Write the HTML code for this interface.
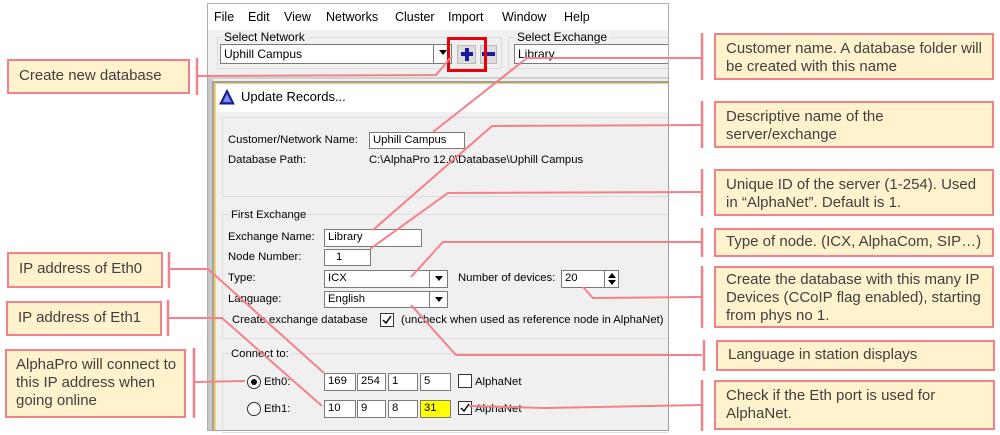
<!DOCTYPE html>
<html><head><meta charset="utf-8"><style>
*{margin:0;padding:0;box-sizing:border-box}
body{width:1000px;height:435px;background:#fff;position:relative;overflow:hidden;font-family:"Liberation Sans",Arial,sans-serif}
.a{position:absolute}
.ui{font-size:11.3px;color:#000;white-space:nowrap;line-height:14px}
.in{position:absolute;background:#fff;border:1px solid #7a7a7a;font-size:11.3px;line-height:15px;padding-left:3px;white-space:nowrap}
.dd{position:absolute;top:0;right:0;width:18px;height:100%;border-left:1px solid #7a7a7a;background:#fff}
.dd:after{content:"";position:absolute;left:5px;top:5px;border-left:4px solid transparent;border-right:4px solid transparent;border-top:5px solid #000}
.cb{position:absolute;width:14px;height:14px;border:1px solid #333;background:#fff}
.box{position:absolute;background:#fff2cc;border:2.5px solid #f4818a;font-size:15px;color:#404040;line-height:18px;padding:4px 0 0 10px;white-space:nowrap}
.grp{position:absolute;border:1px solid #dcdcdc}
</style></head><body>
<div class="a" style="left:207px;top:3px;width:462px;height:428px;border:1px solid #adadad;background:#f0f0f0;overflow:hidden">
</div>
<div class="a" style="left:208px;top:4px;width:460px;height:26px;background:#fff"></div>
<div class="a ui" style="top:10px;left:214px;font-size:12.5px">File</div>
<div class="a ui" style="top:10px;left:248px;font-size:12.5px">Edit</div>
<div class="a ui" style="top:10px;left:284px;font-size:12.5px">View</div>
<div class="a ui" style="top:10px;left:326px;font-size:12.5px">Networks</div>
<div class="a ui" style="top:10px;left:395px;font-size:12.5px">Cluster</div>
<div class="a ui" style="top:10px;left:448px;font-size:12.5px">Import</div>
<div class="a ui" style="top:10px;left:502px;font-size:12.5px">Window</div>
<div class="a ui" style="top:10px;left:564px;font-size:12.5px">Help</div>
<div class="grp" style="left:217px;top:37px;width:285px;height:32px"></div>
<div class="grp" style="left:508px;top:37px;width:160px;height:32px;border-right:none"></div>
<div class="a ui" style="left:222px;top:30px;background:#f0f0f0;padding:0 2px;font-size:12px">Select Network</div>
<div class="a ui" style="left:515px;top:30px;background:#f0f0f0;padding:0 2px;font-size:12px">Select Exchange</div>
<div class="in" style="left:220px;top:44px;width:232px;height:20px;line-height:18px;font-size:12px">Uphill Campus<div class="dd"></div></div>
<div class="in" style="left:514px;top:44px;width:154px;height:20px;line-height:18px;border-right:none;font-size:12px">Library</div>
<div class="a" style="left:457px;top:45px;width:19px;height:19px;background:#dcdcdc;border:1px solid #bbb"></div>
<div class="a" style="left:465px;top:48px;width:4px;height:13px;background:#1a1aa0"></div>
<div class="a" style="left:461px;top:52px;width:12px;height:4px;background:#1a1aa0"></div>
<div class="a" style="left:480px;top:45px;width:17px;height:19px;background:#dcdcdc;border:1px solid #bbb"></div>
<div class="a" style="left:482px;top:52px;width:13px;height:4px;background:#1a1aa0"></div>
<div class="a" style="left:447px;top:37px;width:40px;height:35px;border:3px solid #e8000b"></div>
<div class="a" style="left:208px;top:77px;width:460px;height:2px;background:#d0d0d0"></div>
<div class="a" style="left:208px;top:79px;width:5px;height:351px;background:#c8c8c8"></div>
<div class="a" style="left:212px;top:81px;width:457px;height:350px;background:#a0a0a0"></div>
<div class="a" style="left:214px;top:83px;width:454px;height:347px;background:#f0f0f0;border-left:2px solid #f0d070;border-top:1px solid #f0d070"></div>
<div class="a" style="left:216px;top:84px;width:452px;height:28px;background:#fff"></div>
<svg class="a" style="left:219px;top:89px" width="16" height="16"><polygon points="8,1 15,15 1,15" fill="#2030c0" stroke="#101060"/><polygon points="8,5 12,13 4,13" fill="#8090ff"/></svg>
<div class="a ui" style="left:241px;top:90px;font-size:13px">Update Records...</div>
<div class="grp" style="left:222px;top:117px;width:446px;height:80px;border-right:none"></div>
<div class="a ui" style="left:228px;top:133px">Customer/Network Name:</div>
<div class="in" style="left:369px;top:132px;width:96px;height:17px">Uphill Campus</div>
<div class="a ui" style="left:228px;top:153px">Database Path:</div>
<div class="a ui" style="left:369px;top:153px">C:\AlphaPro 12.0\Database\Uphill Campus</div>
<div class="grp" style="left:222px;top:214px;width:446px;height:125px;border-right:none"></div>
<div class="a ui" style="left:229px;top:208px;background:#f0f0f0;padding:0 2px">First Exchange</div>
<div class="a ui" style="left:228px;top:230px">Exchange Name:</div>
<div class="in" style="left:324px;top:229px;width:98px;height:18px">Library</div>
<div class="a ui" style="left:228px;top:250px">Node Number:</div>
<div class="in" style="left:324px;top:249px;width:47px;height:17px;padding-left:11px">1</div>
<div class="a ui" style="left:228px;top:271px">Type:</div>
<div class="in" style="left:324px;top:270px;width:124px;height:18px">ICX<div class="dd"></div></div>
<div class="a ui" style="left:458px;top:271px">Number of devices:</div>
<div class="in" style="left:561px;top:270px;width:58px;height:18px">20<div class="a" style="right:0;top:0;width:14px;height:16px;border-left:1px solid #7a7a7a"></div></div>
<svg class="a" style="left:606px;top:271px" width="12" height="16"><polygon points="6,2 10,7 2,7" fill="#000"/><polygon points="6,14 10,9 2,9" fill="#000"/></svg>
<div class="a ui" style="left:228px;top:292px">Language:</div>
<div class="in" style="left:324px;top:291px;width:124px;height:17px">English<div class="dd"></div></div>
<div class="a ui" style="left:232px;top:313px">Create exchange database</div>
<div class="cb" style="left:380px;top:313px"></div>
<svg class="a" style="left:380px;top:313px" width="14" height="14"><path d="M3 7 L6 10 L11 3" stroke="#000" stroke-width="1.5" fill="none"/></svg>
<div class="a ui" style="left:401px;top:313px">(uncheck when used as reference node in AlphaNet)</div>
<div class="grp" style="left:222px;top:353px;width:446px;height:80px;border-right:none"></div>
<div class="a ui" style="left:229px;top:347px;background:#f0f0f0;padding:0 2px">Connect to:</div>
<div class="a" style="left:247px;top:375px;width:14px;height:14px;border:1px solid #333;border-radius:50%;background:#fff"></div>
<div class="a" style="left:251px;top:379px;width:6px;height:6px;border-radius:50%;background:#000"></div>
<div class="a ui" style="left:264px;top:375px">Eth0:</div>
<div class="in" style="left:324px;top:373px;width:32px;height:18px">169</div>
<div class="in" style="left:357px;top:373px;width:29px;height:18px">254</div>
<div class="in" style="left:388px;top:373px;width:30px;height:18px">1</div>
<div class="in" style="left:420px;top:373px;width:31px;height:18px">5</div>
<div class="cb" style="left:458px;top:374px"></div>
<div class="a ui" style="left:475px;top:375px">AlphaNet</div>
<div class="a" style="left:247px;top:402px;width:14px;height:14px;border:1px solid #333;border-radius:50%;background:#fff"></div>
<div class="a ui" style="left:264px;top:402px">Eth1:</div>
<div class="in" style="left:324px;top:400px;width:32px;height:18px">10</div>
<div class="in" style="left:357px;top:400px;width:29px;height:18px">9</div>
<div class="in" style="left:388px;top:400px;width:30px;height:18px">8</div>
<div class="in" style="left:420px;top:400px;width:31px;height:18px;background:#ffff00">31</div>
<div class="cb" style="left:458px;top:401px"></div>
<svg class="a" style="left:458px;top:401px" width="14" height="14"><path d="M3 7 L6 10 L11 3" stroke="#000" stroke-width="1.5" fill="none"/></svg>
<div class="a ui" style="left:475px;top:402px">AlphaNet</div>
<svg class="a" style="left:0;top:0" width="1000" height="435" fill="none" stroke="#f4818a" stroke-width="2">
<path d="M197 76 L436 75 L452 56"/>
<path d="M702 58 L527 58 L433 132"/>
<path d="M702 125 L492 126 L373 230"/>
<path d="M702 192 L448 193 L370 249"/>
<path d="M702 242 L443 242 L411 277"/>
<path d="M702 297 L593 298 L583 287"/>
<path d="M702 355 L456 355 L411 305"/>
<path d="M702 405 L545 408 L469 406"/>
<path d="M169 269 L208 269 L324 373"/>
<path d="M168 318 L222 318 L322 406"/>
<path d="M194 382 L245 381"/>
<g stroke-width="2.5">
<path d="M197 58 V95"/><path d="M169 252 V288"/><path d="M168 300 V336"/><path d="M194 348 V418"/>
<path d="M702 33 V80"/><path d="M702 101 V148"/><path d="M702 169 V216"/><path d="M702 228 V257"/><path d="M702 266 V328"/><path d="M704 340 V371"/><path d="M702 380 V431"/>
</g>
</svg>
<div class="box" style="left:7px;top:59px;width:183px;height:35px;padding-top:6px">Create new database</div>
<div class="box" style="left:7px;top:252px;width:156px;height:36px;padding-top:6px">IP address of Eth0</div>
<div class="box" style="left:6px;top:301px;width:156px;height:35px;padding-top:6px">IP address of Eth1</div>
<div class="box" style="left:5px;top:349px;width:181px;height:69px;padding-left:9px;padding-top:5px">AlphaPro will connect to<br>this IP address when<br>going online</div>
<div class="box" style="left:714px;top:33px;width:280px;height:47px;padding-top:5px">Customer name. A database folder will<br>be created with this name</div>
<div class="box" style="left:714px;top:101px;width:280px;height:47px;padding-top:5px">Descriptive name of the<br>server/exchange</div>
<div class="box" style="left:714px;top:169px;width:280px;height:47px;padding-top:5px">Unique ID of the server (1-254). Used<br>in “AlphaNet”. Default is 1.</div>
<div class="box" style="left:714px;top:228px;width:280px;height:29px;padding-top:3px">Type of node. (ICX, AlphaCom, SIP…)</div>
<div class="box" style="left:714px;top:266px;width:280px;height:62px;padding-top:3px">Create the database with this many IP<br>Devices (CCoIP flag enabled), starting<br>from phys no 1.</div>
<div class="box" style="left:716px;top:340px;width:279px;height:31px;padding-top:4px">Language in station displays</div>
<div class="box" style="left:714px;top:380px;width:281px;height:50px;padding-top:5px">Check if the Eth port is used for<br>AlphaNet.</div>
</body></html>
